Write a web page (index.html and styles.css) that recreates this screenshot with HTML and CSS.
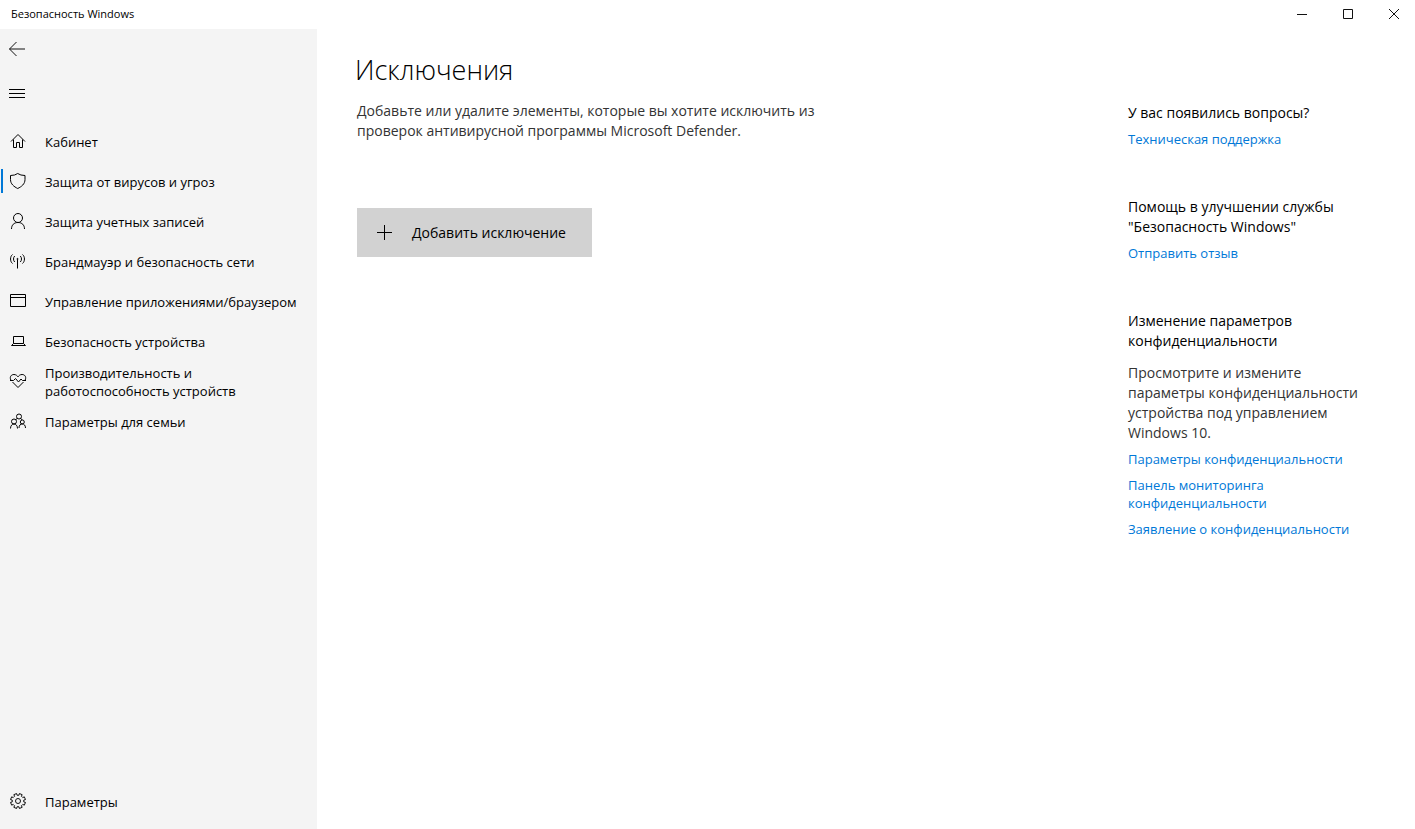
FILE: index.html
```html
<!DOCTYPE html>
<html lang="ru">
<head>
<meta charset="utf-8">
<title>Безопасность Windows</title>
<link rel="stylesheet" href="styles.css">
</head>
<body>
<header class="titlebar">
  <span class="titlebar-text">Безопасность Windows</span>
  <div class="window-controls">
    <button class="window-button" type="button" aria-label="Свернуть"><svg width="10" height="10"><path d="M0 5.500H10"/></svg></button>
    <button class="window-button" type="button" aria-label="Развернуть"><svg width="10" height="10"><path d="M.5.5H9.500V9.500H.5Z"/></svg></button>
    <button class="window-button" type="button" aria-label="Закрыть"><svg width="10" height="10"><path d="M0 0L10 10M10 0L0 10"/></svg></button>
  </div>
</header>
<div class="layout">
  <div class="sidebar">
    <button class="tool-button" type="button" aria-label="Назад"><svg width="18" height="16"><path d="M1.500 8H17M8.500 1L1.500 8L8.500 15"/></svg></button>
    <button class="tool-button menu-button" type="button" aria-label="Меню"><svg width="18" height="16"><path d="M1 4.500H17M1 8.500H17M1 12.500H17" class="strong"/></svg></button>
    <nav class="nav">
      <a class="nav-item" href="#"><svg class="icon" width="18" height="18"><path class="strong" d="M2 9.500L9 2.500L16 9.500M4.500 7.500V15.500H7.500V10.500H10.500V15.500H13.500V7.500"/></svg><span>Кабинет</span></a>
      <a class="nav-item active" href="#"><svg class="icon" width="18" height="18"><path class="strong" d="M1.500 3.500Q6 3.500 8.700 1.500Q11.500 3.500 16 3.500V7.500C16 12 12.500 14.700 8.700 16.500C5 14.700 1.500 12 1.500 7.500Z"/></svg><span>Защита от вирусов и угроз</span></a>
      <a class="nav-item" href="#"><svg class="icon" width="18" height="18"><circle class="strong" cx="9" cy="6" r="4.500"/><path class="strong" d="M2.500 17C2.500 13 5 10.500 9 10.500S15.500 13 15.500 17"/></svg><span>Защита учетных записей</span></a>
      <a class="nav-item" href="#"><svg class="icon" width="18" height="18"><path class="strong" d="M8.500 6.500V16.500M3.500 2.500C.9 4.500.9 9.500 3.500 11.500M13.500 2.500C16.100 4.500 16.100 9.500 13.500 11.500M5.700 4C4.100 5.500 4.100 8.500 5.700 10M11.300 4C12.900 5.500 12.900 8.500 11.300 10"/><circle cx="8.500" cy="7" r=".6"/></svg><span>Брандмауэр и безопасность сети</span></a>
      <a class="nav-item" href="#"><svg class="icon" width="18" height="18"><path class="strong" d="M1.500 2.500H16.500V14.500H1.500ZM1.500 5.500H16.500"/></svg><span>Управление приложениями/браузером</span></a>
      <a class="nav-item" href="#"><svg class="icon" width="18" height="18"><path class="strong" d="M4.500 4.500H14.500V11.500H4.500ZM4.500 11.500L2.500 13.500H16.500L14.500 11.500"/></svg><span>Безопасность устройства</span></a>
      <a class="nav-item" href="#"><svg class="icon" width="18" height="18"><path class="strong" d="M1.800 8C.3 4.500 2.500 2.500 5 2.500C7 2.500 8.300 3.800 9 4.800C9.700 3.800 11 2.500 13 2.500C15.500 2.500 17.700 4.500 16.200 8M3.500 10L9 15.500L14.500 10M1 8.500H4.500L6.500 6.500L9.500 10L12 7L13.500 8.500H17"/></svg><span>Производительность и работоспособность устройств</span></a>
      <a class="nav-item" href="#"><svg class="icon" width="18" height="18"><circle class="strong" cx="10" cy="4.500" r="2.500"/><circle class="strong" cx="5" cy="9.500" r="2.500"/><circle class="strong" cx="13.300" cy="10" r="2"/><path class="strong" d="M1.500 16.500C1.500 10.500 8.500 10.500 8.500 16.500M10 16C10 10.500 16.500 10.500 16.500 16M6.500 7.500L8.500 6.500M11.500 6.500Q13 7 13 8"/></svg><span>Параметры для семьи</span></a>
    </nav>
    <a class="nav-item settings" href="#"><svg class="icon" width="18" height="18"><circle cx="9" cy="9" r="2.500"/><path d="M7.600 1.500L8 3.200H10L10.400 1.500L13.200 2.700L12.400 4.200L13.800 5.600L15.300 4.800L16.500 7.600L14.800 8V10L16.500 10.400L15.300 13.200L13.800 12.400L12.400 13.800L13.200 15.300L10.400 16.500L10 14.800H8L7.600 16.500L4.800 15.300L5.600 13.800L4.200 12.400L2.700 13.200L1.500 10.400L3.200 10V8L1.500 7.600L2.700 4.800L4.200 5.600L5.600 4.200L4.800 2.700Z"/></svg><span>Параметры</span></a>
  </div>
  <main class="content">
    <h1 class="page-title">Исключения</h1>
    <p class="description">Добавьте или удалите элементы, которые вы хотите исключить из проверок антивирусной программы Microsoft Defender.</p>
    <button class="add-button" type="button"><svg width="16" height="16"><path class="strong" d="M0 7.500H15M7.500 0V15"/></svg><span>Добавить исключение</span></button>
  </main>
  <aside class="help">
    <section class="help-group">
      <h2 class="help-title">У вас появились вопросы?</h2>
      <a class="help-link" href="#">Техническая поддержка</a>
    </section>
    <section class="help-group">
      <h2 class="help-title">Помощь в улучшении службы "Безопасность Windows"</h2>
      <a class="help-link" href="#">Отправить отзыв</a>
    </section>
    <section class="help-group">
      <h2 class="help-title">Изменение параметров конфиденциальности</h2>
      <p class="help-text">Просмотрите и измените параметры конфиденциальности устройства под управлением Windows 10.</p>
      <a class="help-link" href="#">Параметры конфиденциальности</a>
      <a class="help-link" href="#">Панель мониторинга конфиденциальности</a>
      <a class="help-link" href="#">Заявление о конфиденциальности</a>
    </section>
  </aside>
</div>
</body>
</html>
```
FILE: styles.css
```css
* { box-sizing: border-box; }
body {
  margin: 0;
  min-height: 100vh;
  display: flex;
  flex-direction: column;
  background: #fff;
  color: #000;
  font-family: "Open Sans", "Noto Sans", sans-serif;
  font-size: 13px;
  line-height: 18px;
}
button { padding: 0; border: 0; background: none; font: inherit; color: inherit; }
a { color: inherit; text-decoration: none; }
h1, h2, p { margin: 0; font-weight: 400; }
svg { display: block; flex: none; fill: none; stroke: #111; stroke-width: 1; }
.strong { stroke: #000; }

.titlebar { display: flex; align-items: center; justify-content: space-between; height: 29px; padding: 0 0 2px 11px; }
.titlebar-text { font-size: 11px; }
.window-controls { display: flex; align-self: stretch; margin-right: -2px; }
.window-button { display: flex; align-items: center; justify-content: center; width: 46px; }

.layout { flex: 1; display: flex; }
.sidebar { flex: 0 0 317px; display: flex; flex-direction: column; padding-bottom: 7px; background: #f4f4f4; }
.tool-button { display: flex; align-items: center; width: 48px; height: 40px; padding-left: 8px; }
.menu-button { height: 48px; }
.nav { padding-top: 5px; }
.nav-item { display: flex; align-items: center; gap: 18px; height: 40px; padding: 0 12px 0 9px; }
.icon { margin-bottom: 2px; }
.nav-item.active { background: linear-gradient(#0078d7, #0078d7) 1px 7px / 2px 24px no-repeat; }
.settings { margin-top: auto; }

.content { flex: 1; display: flex; flex-direction: column; align-items: flex-start; padding: 23px 40px; }
.page-title { margin-left: -2px; font-size: 27px; font-weight: 300; line-height: 36px; }
.description { max-width: 480px; margin-top: 13px; font-size: 14px; line-height: 20px; color: #333; }
.add-button { display: flex; align-items: center; gap: 19px; height: 49px; margin-top: 67px; padding: 0 26px 0 20px; background: #d2d2d2; font-size: 14px; }

.help { flex: 0 0 287px; padding: 74px 40px 0 0; }
.help-group { display: flex; flex-direction: column; gap: 8px; margin-bottom: 49px; }
.help-title, .help-text { font-size: 14px; line-height: 20px; }
.help-title { margin-bottom: -1px; }
.help-text { margin: 5px 0 -1px; color: #333; }
.help-link { color: #0078d7; }
```
